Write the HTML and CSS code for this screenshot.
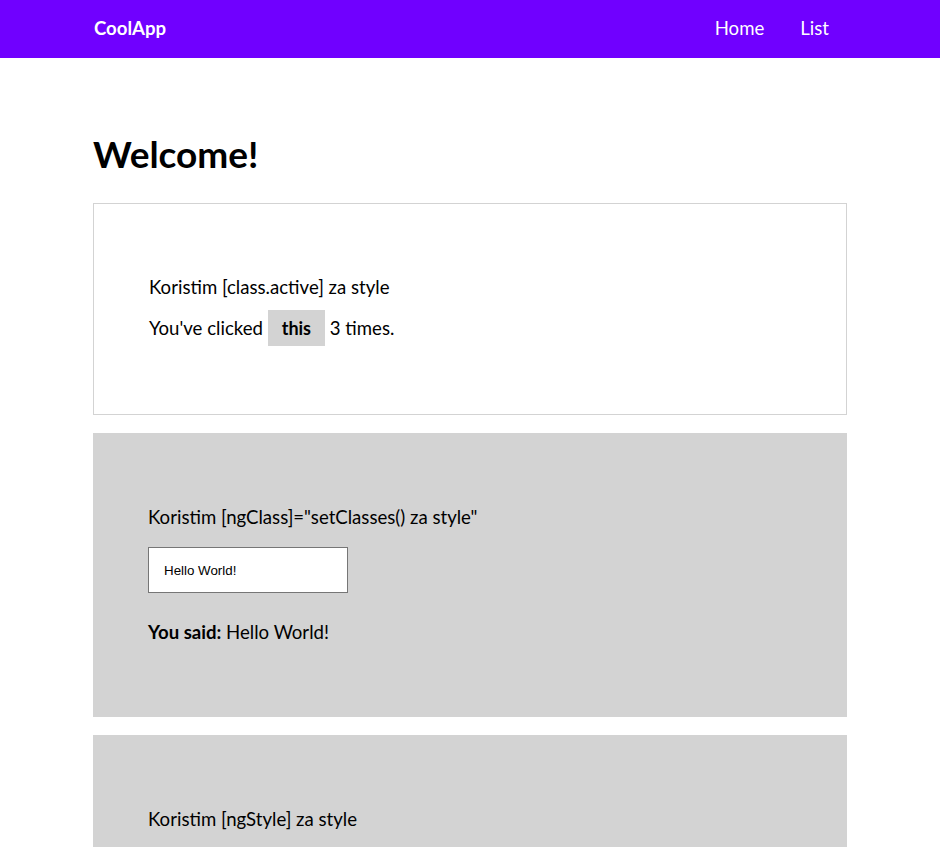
FILE: index.html
```html
<!DOCTYPE html>
<html>
<head>
<meta charset="utf-8">
<link rel="stylesheet" href="styles.css">
</head>
<body>
<nav class="navbar">
  <div class="nav-inner">
    <a class="brand" href="#">CoolApp</a>
    <div class="nav-links">
      <a href="#">Home</a>
      <a href="#">List</a>
    </div>
  </div>
</nav>
<main class="container">
  <h1 class="title">Welcome!</h1>
  <section class="card card-outline">
    <p class="first">Koristim [class.active] za style</p>
    <p class="clicks">You've clicked <button class="this-btn">this</button> 3 times.</p>
  </section>
  <section class="card card-gray card-form">
    <p>Koristim [ngClass]="setClasses() za style"</p>
    <input class="text-input" type="text" value="Hello World!">
    <p><strong>You said:</strong> Hello World!</p>
  </section>
  <section class="card card-gray">
    <p>Koristim [ngStyle] za style</p>
    <p>&nbsp;</p>
  </section>
</main>
</body>
</html>
```

FILE: styles.css
```css
html, body {
  margin: 0;
  padding: 0;
}
body {
  font-family: Lato, "Open Sans", sans-serif;
  font-size: 18.6px;
  line-height: 24px;
  color: #000;
  background: #fff;
}
.navbar {
  background: #7000ff;
  height: 58px;
}
.nav-inner {
  width: 754px;
  margin: 0 auto;
  height: 100%;
  display: flex;
  align-items: center;
  justify-content: space-between;
}
.brand {
  color: #fff;
  text-decoration: none;
  font-weight: 700;
  font-size: 18.6px;
  padding-left: 1px;
  margin-top: -2px;
}
.nav-links {
  display: flex;
  margin-top: -2px;
}
.nav-links a {
  color: #fff;
  text-decoration: none;
  font-size: 18.6px;
  padding: 0 18px;
}
.container {
  width: 754px;
  margin: 0 auto;
  padding-top: 50px;
}
.title {
  font-size: 37px;
  font-weight: 700;
  margin: 21px 0 24px 0;
  line-height: 50px;
}
.card {
  padding: 55px;
  margin-bottom: 18px;
}
.card p {
  margin: 18px 0;
}
.card-outline {
  border: 1px solid #d3d3d3;
  padding-top: 53px;
  padding-bottom: 50px;
}
.card-outline .first {
  margin-bottom: 0;
}
.card-outline .clicks {
  margin-top: 11px;
}
.card-gray {
  background: #d3d3d3;
  padding-top: 54px;
}
.card-form {
  padding-bottom: 55px;
}
.this-btn {
  font-family: inherit;
  font-size: 18px;
  font-weight: 700;
  background: #d3d3d3;
  border: none;
  padding: 7px 14px;
  margin: 0;
  color: #000;
}
.text-input {
  display: block;
  width: 200px;
  height: 46px;
  box-sizing: border-box;
  border: 1px solid #767676;
  padding: 0 15px;
  margin: 0 0 27px 0;
  font-family: "Liberation Sans", Arial, sans-serif;
  font-size: 13.33px;
  color: #000;
  background: #fff;
}
```
